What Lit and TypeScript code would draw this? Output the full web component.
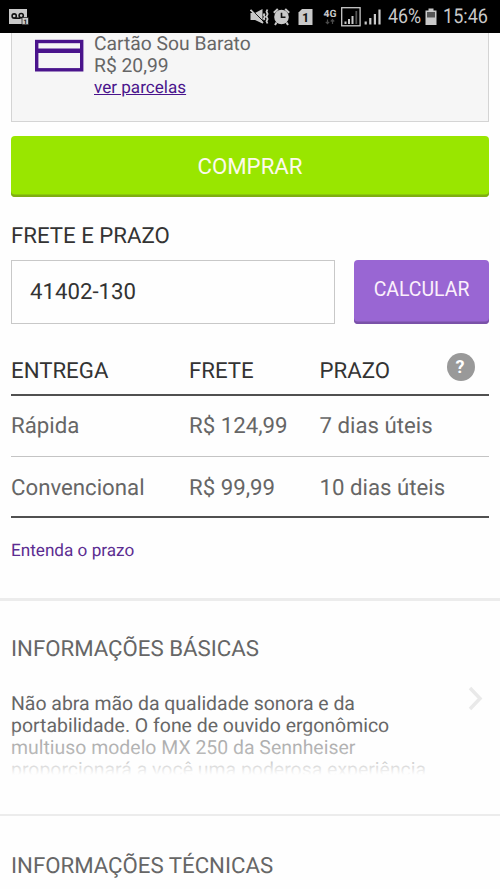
import { LitElement, html, css } from "lit";
import { customElement } from "lit/decorators.js";

interface Delivery {
  name: string;
  price: string;
  time: string;
}

const DELIVERIES: Delivery[] = [
  { name: "Rápida", price: "R$ 124,99", time: "7 dias úteis" },
  { name: "Convencional", price: "R$ 99,99", time: "10 dias úteis" },
];

@customElement("status-bar")
class StatusBar extends LitElement {
  static styles = css`
    :host { display: block; flex: none; height: 33px; background: #000; color: #c9c9c9; }
    .bar { display: flex; align-items: center; justify-content: space-between; height: 33px; padding: 0 12px 0 9px; }
    .group { display: flex; align-items: center; }
    svg { display: block; flex: none; }
    .pct { font-size: 20.5px; line-height: 33px; width: 33px; margin-left: 6px; margin-top: 2px; white-space: nowrap; }
    .pct span, .time span { display: inline-block; transform-origin: 0 50%; }
    .pct span { transform: scaleX(0.87); }
    .time { font-size: 20.5px; line-height: 33px; margin-left: 6px; margin-top: 2px; width: 45px; white-space: nowrap; }
    .time span { transform: scaleX(0.88); }
    .small { font-weight: 700; font-size: 10px; }
    .sim { font-weight: 700; font-size: 12.5px; }
    .mini { font-size: 6.5px; font-weight: 700; }
    .g1 { margin-left: 4px; }
    .g2 { margin-left: 8px; }
    .g3 { margin-left: 10px; }
    .g4 { margin-left: 4px; }
    .g5 { margin-left: 4px; }
    .g6 { margin-left: 3px; }
    .g7 { margin-left: 7px; }
  `;
  render() {
    return html`<div class="bar">
      <div class="group">
        <svg width="20" height="33" viewBox="0 0 20 33">
          <path d="M0 9h18v15H0z" fill="#c9c9c9" />
          <g fill="none" stroke="#111" stroke-width="1.6">
            <circle cx="5.2" cy="16" r="2.1" /><circle cx="12.2" cy="15.6" r="2.1" />
            <path d="M5.5 18.2h6" />
          </g>
          <path d="M13 17.500h6.500v7.200H13z" fill="#c9c9c9" stroke="#111" stroke-width=".7" />
          <text class="mini" x="14.5" y="23.500" fill="#111">1</text>
        </svg>
      </div>
      <div class="group">
        <svg width="19" height="33" viewBox="0 0 19 33">
          <path d="M.5 13h4.500L12.500 9V23.500L5 20H.5z" fill="#c9c9c9" />
          <path d="M1.500 9.500L13.500 21.500" stroke="#000" stroke-width="1" />
          <path d="M.5 9.800L13 23" stroke="#c9c9c9" stroke-width="1.800" />
          <path d="M14.600 13.500l-.8 1.600 1 1.800-1 1.800.8 1.300M17.400 9.500l-.9 2.200 1.100 2.400-1.100 2.400 1.100 2.400-1.100 2.400 1 2.200" fill="none" stroke="#c9c9c9" stroke-width="1.800" />
        </svg>
        <svg class="g1" width="17" height="33" viewBox="0 0 17 33">
          <path d="M.8 12.800L4.800 9M16.200 12.800L12.200 9M3.500 22.500L2 25M13.500 22.500L15 25" stroke="#c9c9c9" stroke-width="2" />
          <circle cx="8.500" cy="17" r="7.300" fill="#c9c9c9" />
          <path d="M8.500 12.700V17.300H12.500" fill="none" stroke="#111" stroke-width="1.600" />
        </svg>
        <svg class="g2" width="15" height="33" viewBox="0 0 15 33">
          <path d="M4 9H14.500V25H.5V12.500z" fill="#c9c9c9" />
          <text class="sim" x="4" y="21.500" fill="#111">1</text>
        </svg>
        <svg class="g3" width="14" height="33" viewBox="0 0 14 33">
          <text class="small" x=".5" y="16.800" fill="#c9c9c9" textLength="13" lengthAdjust="spacingAndGlyphs">4G</text>
          <path d="M4.500 19.500v4M2.800 21.800l1.700 1.900 1.700-1.900M9.500 24v-4M7.800 21.500l1.700-1.900 1.700 1.900" fill="none" stroke="#4a4a4a" stroke-width="1.200" />
        </svg>
        <svg class="g4" width="20" height="33" viewBox="0 0 20 33">
          <rect x=".7" y="7.700" width="18.400" height="18.100" fill="none" stroke="#c9c9c9" stroke-width="1.300" />
          <path d="M4.500 21.500v2.500M8 19v5M11.500 16v8" stroke="#c9c9c9" stroke-width="2" />
          <path d="M15.300 11v13" stroke="#555" stroke-width="1.800" />
        </svg>
        <svg class="g6" width="17" height="33" viewBox="0 0 17 33">
          <path d="M1.700 21.500v3M6.300 18v6.500M10.900 14v10.500M15.500 9.500v15" stroke="#c9c9c9" stroke-width="2.200" />
        </svg>
        <div class="pct g7"><span>46%</span></div>
        <svg class="g5" width="12" height="33" viewBox="0 0 12 33">
          <path d="M3.500 8.500h5v2h3V25H.5V10.500h3z" fill="#c9c9c9" />
          <path d="M2 12h8v5.500H2z" fill="#555" />
        </svg>
        <div class="time"><span>15:46</span></div>
      </div>
    </div>`;
  }
}

@customElement("app-root")
class AppRoot extends LitElement {
  static styles = css`
    :host {
      display: flex; flex-direction: column; height: 889px; overflow: hidden;
      background: #fefefe; color: #666;
      font-family: Roboto, "Liberation Sans", sans-serif; font-size: 22.220px;
      text-rendering: geometricPrecision;
    }
    * { box-sizing: border-box; }
    .main { padding: 0 11px; display: flex; flex-direction: column; }
    .card {
      height: 89px; display: flex; background: #f6f6f6;
      border: 1.400px solid #d4d4d4; border-top: 0; padding-left: 23px;
    }
    .cardicon { display: block; margin-top: 6px; flex: none; }
    .cardtext { margin-left: 10px; font-size: 19.300px; line-height: 22.200px; }
    .link { font-size: 17.100px; line-height: 23px; color: #4a148c; text-decoration: underline; }
    .buy, .calc {
      display: flex; align-items: center; justify-content: center;
      color: #fdf9ec; border-radius: 4px; border: 0; font-family: inherit; padding: 0;
    }
    .buy { margin-top: 14px; height: 61px; padding-bottom: 2px; font-size: 22.220px; background: #99e600; box-shadow: inset 0 -2.500px #7fae12; }
    h2 { margin: 0; font-weight: 400; font-size: 22.220px; line-height: 26px; }
    .dark { color: #333; }
    .ship { margin-top: 26px; }
    .form { display: flex; justify-content: space-between; margin-top: 11px; }
    .zip {
      width: 324px; height: 64px; border: 1.400px solid #c8c8c8; padding: 0 18px; background: #fefefe;
      display: flex; align-items: center; color: #333;
    }
    .calc { width: 135px; height: 64px; font-size: 19.440px; background: #9966d3; box-shadow: inset 0 -2.500px #7a52a8; padding-bottom: 5px; color: #fbf0fb; }
    .table { margin-top: 10px; }
    .row { display: grid; grid-template-columns: 178px 130.500px 1fr; align-items: center; height: 61px; border-bottom: 1px solid #c4c4c4; }
    .head { height: 62px; border-bottom: 2px solid #505050; color: #333; padding-top: 14px; }
    .last { height: 61px; border-bottom: 2px solid #505050; padding-top: 2px; }
    .period { display: flex; align-items: center; justify-content: space-between; padding-right: 14px; }
    .help {
      width: 28px; height: 28px; border-radius: 50%; background: #999; color: #fff; margin: -9px 0 -1px; padding-right: 2px;
      display: flex; align-items: center; justify-content: center; font-size: 18px; font-weight: 700;
    }
    .more { margin-top: 22px; font-size: 17.150px; line-height: 22px; color: #5c2d91; }
    .rule { height: 2.500px; background: #ececec; flex: none; }
    .r1 { margin-top: 36px; }
    .r2 { margin-top: 36px; }
    .info { margin-top: 35px; }
    .tech { margin-top: 36.500px; }
    .summary { display: flex; justify-content: space-between; margin-top: 31px; height: 85px; }
    .text { position: relative; width: 430px; height: 89px; font-size: 19.440px; line-height: 22.220px; }
    .fade { position: absolute; inset: 0; background: linear-gradient(rgba(254,254,254,0) 41%, rgba(254,254,254,.45) 52%, rgba(254,254,254,.55) 68%, rgba(254,254,254,.7) 79%, #fefefe 92%); }
    .chev { display: block; margin: -7px 6px 0 0; }
  `;

  private line(d: Delivery, last: boolean) {
    return html`<div class="row ${last ? "last" : ""}">
      <span>${d.name}</span><span>${d.price}</span><span>${d.time}</span>
    </div>`;
  }

  render() {
    return html`
      <status-bar></status-bar>
      <div class="main">
        <div class="card">
          <svg class="cardicon" width="49" height="33" viewBox="0 0 49 33">
            <rect x="1.700" y="2.500" width="45" height="28.300" fill="#f6f6f6" stroke="#4a148c" stroke-width="3.400" />
            <path d="M1 11.700h46" stroke="#4a148c" stroke-width="4.600" />
          </svg>
          <div class="cardtext">
            <div>Cartão Sou Barato</div>
            <div>R$ 20,99</div>
            <div class="link">ver parcelas</div>
          </div>
        </div>
        <button class="buy">COMPRAR</button>
        <h2 class="ship dark">FRETE E PRAZO</h2>
        <div class="form">
          <div class="zip">41402-130</div>
          <button class="calc">CALCULAR</button>
        </div>
        <div class="table">
          <div class="row head">
            <span>ENTREGA</span><span>FRETE</span>
            <span class="period">PRAZO<span class="help">?</span></span>
          </div>
          ${DELIVERIES.map((d, i) => this.line(d, i === DELIVERIES.length - 1))}
        </div>
        <div class="more">Entenda o prazo</div>
      </div>
      <div class="rule r1"></div>
      <div class="main">
        <h2 class="info">INFORMAÇÕES BÁSICAS</h2>
        <div class="summary">
          <div class="text">
            Não abra mão da qualidade sonora e da<br />portabilidade. O fone de ouvido ergonômico<br />multiuso modelo MX 250 da Sennheiser<br />proporcionará a você uma poderosa experiência
            <div class="fade"></div>
          </div>
          <svg class="chev" width="15" height="26" viewBox="0 0 15 26">
            <path d="M2 2l10 10.500L2 23" fill="none" stroke="#e9e9e9" stroke-width="3.500" />
          </svg>
        </div>
      </div>
      <div class="rule r2"></div>
      <div class="main"><h2 class="info tech">INFORMAÇÕES TÉCNICAS</h2></div>
    `;
  }
}
